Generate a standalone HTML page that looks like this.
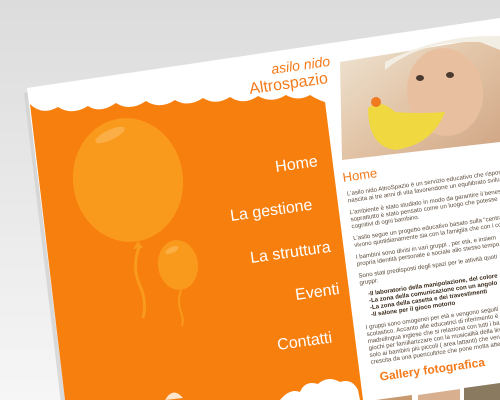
<!DOCTYPE html>
<html><head><meta charset="utf-8"><style>
html,body{margin:0;padding:0;width:500px;height:400px;overflow:hidden;background:#ececec}
svg{display:block}
.b{font-family:"Liberation Sans",sans-serif;font-size:6.1px;fill:#5a4a3a}
.bb{font-family:"Liberation Sans",sans-serif;font-size:6.1px;fill:#3a2a1a;font-weight:bold}
.m{font-family:"Liberation Sans",sans-serif;fill:#fff}
.o{font-family:"Liberation Sans",sans-serif;fill:#f47a1a}
</style></head><body>
<svg width="500" height="400" viewBox="0 0 500 400" xmlns="http://www.w3.org/2000/svg">
<defs>
<linearGradient id="bg" x1="0" y1="0" x2="0" y2="1"><stop offset="0" stop-color="#dcdcdc"/><stop offset="1" stop-color="#f6f6f6"/></linearGradient>
<linearGradient id="ph" x1="0" y1="0" x2="1" y2="1"><stop offset="0" stop-color="#efe6d6"/><stop offset="0.5" stop-color="#e2c4a6"/><stop offset="1" stop-color="#cfa482"/></linearGradient>
</defs>
<rect width="500" height="400" fill="url(#bg)"/>
<polygon points="26,90 500,18 500,400 63,400" fill="#cfcfcf" opacity="0.7" transform="translate(-2,3)"/>
<polygon points="27,88 500,18 500,400 65,400" fill="#fff"/>
<!-- orange panel -->
<path d="M30,104 Q42,116 58,107 Q72,116 88,106 Q100,114 116,103 Q130,112 146,101 Q160,110 175,100 Q188,108 203,98 Q216,106 230,97 Q244,106 258,96 Q272,104 286,95 Q298,102 310,95 Q318,100 325,102 L363,400 L65,400 Z" fill="#f77f0e"/>
<!-- balloons -->
<ellipse cx="128" cy="180" rx="55" ry="62" fill="#fa9a1c" transform="rotate(-8 128 180)"/>
<path d="M138,241 l-5,8 l10,-1 z" fill="#fa9a1c"/>
<path d="M139,248 q-8,20 2,40 q6,16 2,30" stroke="#fa9a1c" stroke-width="3" fill="none"/>
<ellipse cx="110" cy="135" rx="16" ry="5" fill="#fbae45" transform="rotate(-25 110 135)"/>
<ellipse cx="178" cy="265" rx="20" ry="25" fill="#fa9a1c" transform="rotate(-8 178 265)"/>
<path d="M181,290 q-4,12 0,22 q3,8 1,14" stroke="#fa9a1c" stroke-width="2" fill="none"/>
<ellipse cx="172" cy="250" rx="7" ry="3" fill="#fbae45" transform="rotate(-25 172 250)"/>
<!-- bottom cloud -->
<path d="M280,400 Q290,388 300,392 Q305,380 318,384 Q328,375 340,382 Q352,378 358,390 L360,400 Z" fill="#fff"/>
<path d="M165,400 q8,-14 18,-2 z" fill="#fff" opacity="0.8"/>
<!-- photo -->
<polygon points="340,62 500,36 500,142 342,160" fill="url(#ph)"/>
<path d="M385,70 Q420,40 480,42 L500,50 L500,36 Q440,34 385,62 Z" fill="#f3eee4"/>
<ellipse cx="445" cy="92" rx="38" ry="44" fill="#e8c0a0" transform="rotate(-8 445 92)"/>
<ellipse cx="420" cy="78" rx="4" ry="3" fill="#4a3a30"/><ellipse cx="450" cy="75" rx="4" ry="3" fill="#4a3a30"/>
<path d="M368,108 Q380,98 395,112 Q420,114 445,112 Q432,145 395,150 Q368,146 368,108 Z" fill="#f0d840"/>
<circle cx="376" cy="102" r="5" fill="#f07a20"/>
<!-- logo -->
<text class="o" x="272" y="74" font-size="14" font-style="italic" transform="rotate(-8 272 74)" fill="#f05a1a">asilo nido</text>
<text class="o" x="250" y="94" font-size="16" transform="rotate(-8 250 94)" fill="#f05a1a">Altrospazio</text>
<!-- menu -->
<text class="m" x="276" y="172" font-size="16" transform="rotate(-8 276 172)">Home</text>
<text class="m" x="231" y="221" font-size="16" transform="rotate(-8 231 221)">La gestione</text>
<text class="m" x="251" y="263" font-size="16" transform="rotate(-8 251 263)">La struttura</text>
<text class="m" x="296" y="300" font-size="16" transform="rotate(-8 296 300)">Eventi</text>
<text class="m" x="278" y="350" font-size="16" transform="rotate(-8 278 350)">Contatti</text>
<!-- content -->
<g transform="rotate(-8 343 180)">
<text class="o" x="343" y="182" font-size="13">Home</text>
<text class="b" x="345" y="196">L'asilo nido AltroSpazio è un servizio educativo che rispon</text>
<text class="b" x="345" y="203">nascita ai tre anni di vita favorendone un equilibrato svilu</text>
<text class="b" x="345" y="215">L'ambiente è stato studiato in modo da garantire il benes</text>
<text class="b" x="345" y="222">soprattutto è stato pensato come un luogo che potesse</text>
<text class="b" x="345" y="229">cognitivi di ogni bambino.</text>
<text class="b" x="345" y="241">L'asilo segue un progetto educativo basato sulla "centra</text>
<text class="b" x="345" y="248">vivono quotidianamente sia con la famiglia che con i co</text>
<text class="b" x="345" y="260">I bambini sono divisi in vari gruppi , per età, e insiem</text>
<text class="b" x="345" y="267">propria identità personale e sociale allo stesso tempo.</text>
<text class="b" x="345" y="279">Sono stati predisposti degli spazi per le attività quoti</text>
<text class="b" x="345" y="286">gruppi:</text>
<text class="bb" x="352" y="298">-Il laboratorio della manipolazione, del colore</text>
<text class="bb" x="352" y="305">-La zona della comunicazione con un angolo</text>
<text class="bb" x="352" y="312">-La zona della casetta e dei travestimenti</text>
<text class="bb" x="352" y="319">-Il salone per il gioco motorio</text>
<text class="b" x="345" y="331">I gruppi sono omogenei per età e vengono seguiti</text>
<text class="b" x="345" y="338">scolastico. Accanto alle educatrici di riferimento è</text>
<text class="b" x="345" y="345">madrelingua inglese che si relaziona con tutti i ba</text>
<text class="b" x="345" y="352">giochi per familiarizzare con la musicalità della lin</text>
<text class="b" x="345" y="359">solo ai bambini più piccoli ( area lattanti) che ven</text>
<text class="b" x="345" y="366">crescita da una puericultrice che pone molta atte</text>
<text class="o" x="352" y="384" font-size="12" fill="#f79a10" font-weight="bold">Gallery fotografica</text>
</g>
<polygon points="376,400 412,395 412,400" fill="#c89a70"/>
<polygon points="418,395 460,389 460,400 418,400" fill="#d8b090"/>
<polygon points="464,388 500,383 500,400 464,400" fill="#8a7a60"/>
</svg>
</body></html>
